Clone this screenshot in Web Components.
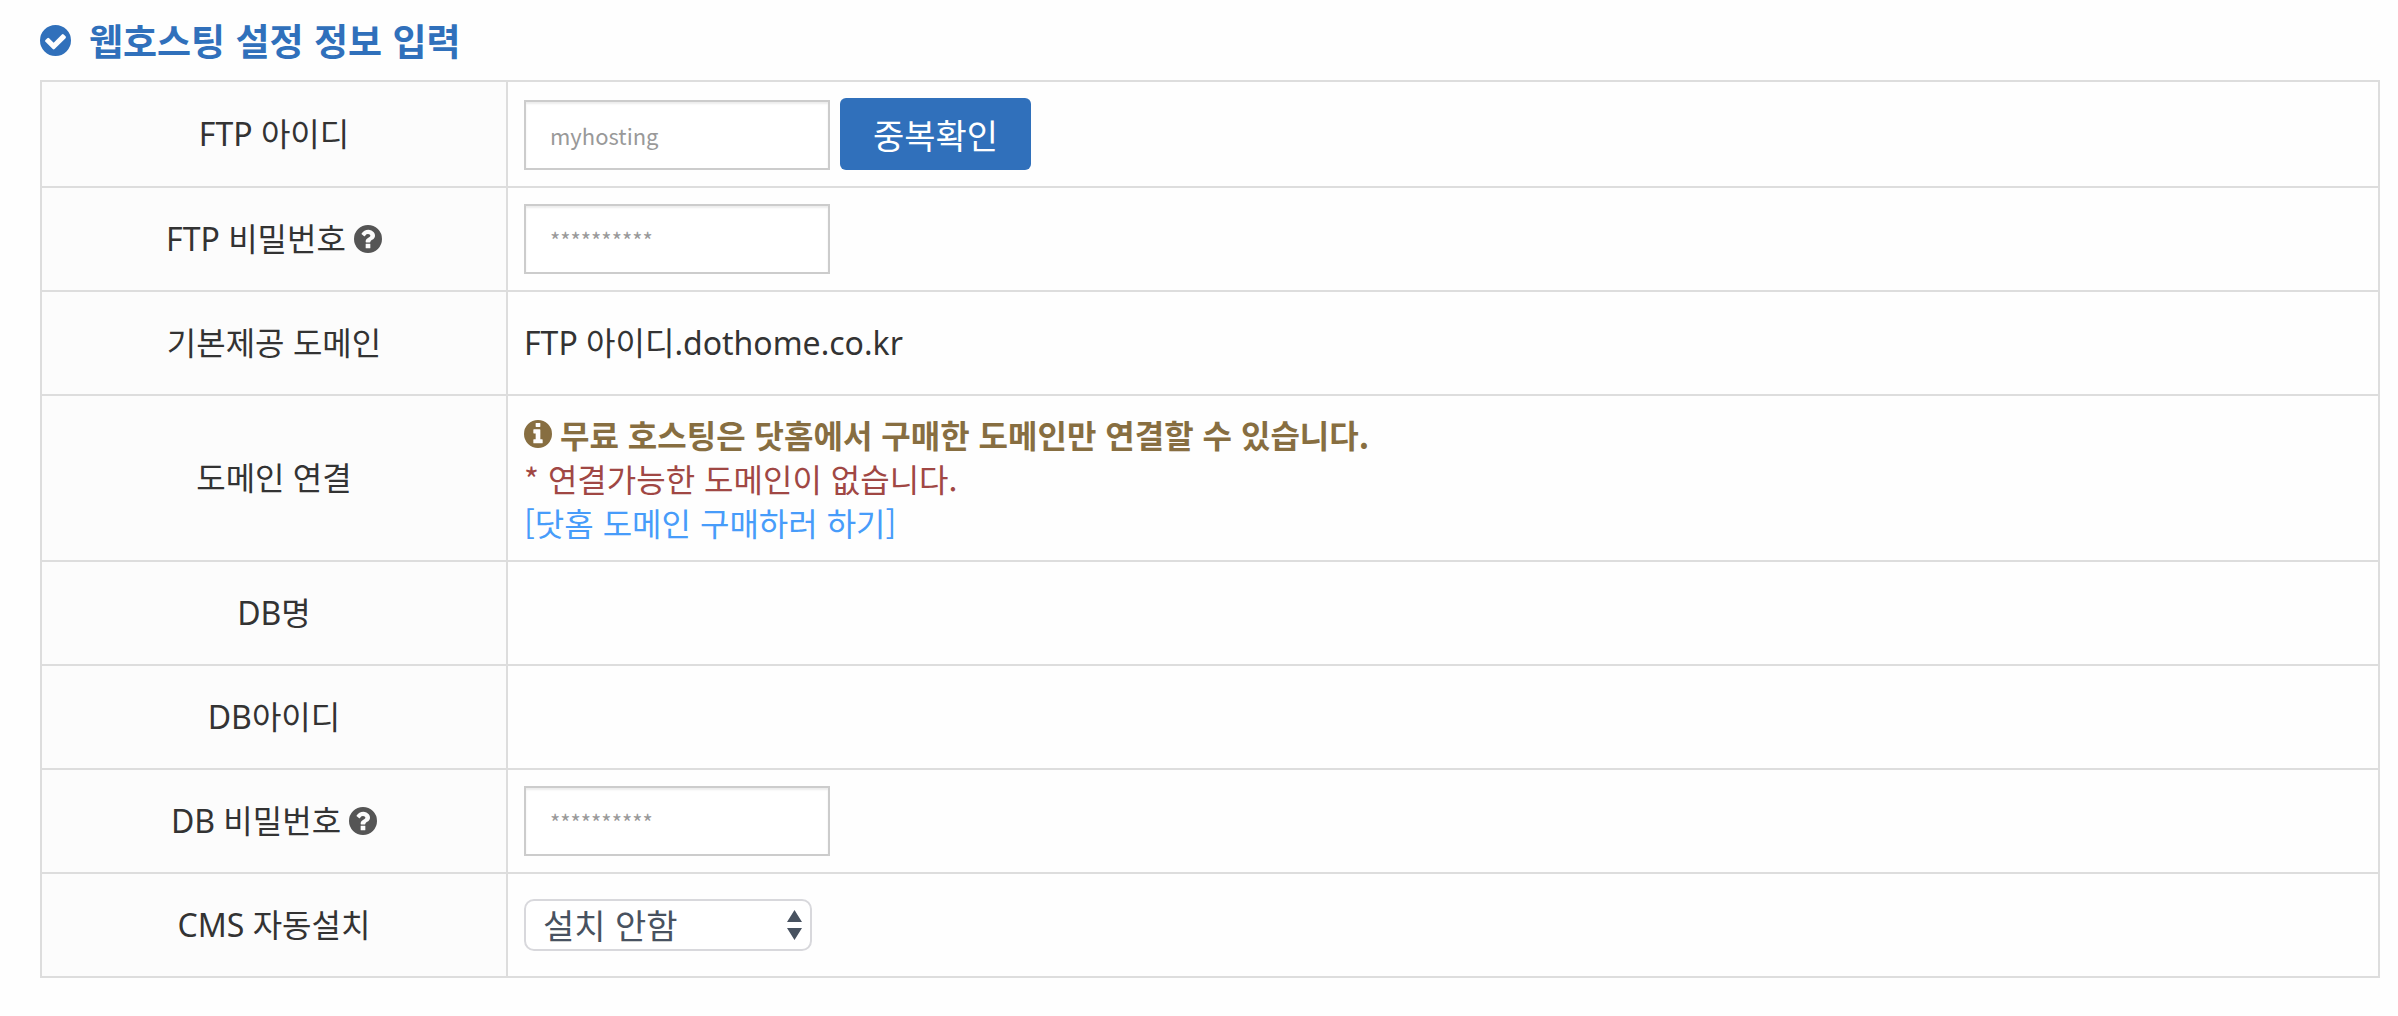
<!DOCTYPE html>
<html lang="ko">
<head>
<meta charset="UTF-8">
<meta name="viewport" content="width=device-width, initial-scale=1.0">
<title>웹호스팅 설정 정보 입력</title>
<style>
    body {
        margin: 0;
        background: #fefefe;
        color: #333;
        font-family: "Noto Sans CJK KR", "Noto Sans", sans-serif;
        font-size: 32px;
        line-height: 44px;
    }

    main {
        padding: 16px 18px 38px 40px;
    }
</style>
</head>
<body>
<main>
    <section-title icon="check">웹호스팅 설정 정보 입력</section-title>
    <hosting-form></hosting-form>
</main>

<script>
const ICONS = {
    check: 'M1412 734q0-28-18-46l-91-90q-19-19-45-19t-45 19l-408 407-226-226q-19-19-45-19t-45 19l-91 90q-18 18-18 46 0 27 18 45l362 362q19 19 45 19 27 0 46-19l543-543q18-18 18-45z',
    question: 'M1024 1376v-192q0-14-9-23t-23-9h-192q-14 0-23 9t-9 23v192q0 14 9 23t23 9h192q14 0 23-9t9-23zm256-672q0-88-55.5-163t-138.5-116-170-41q-243 0-371 213-15 24 8 42l132 100q7 6 19 6 16 0 25-12 53-68 86-92 34-24 86-24 48 0 85.5 26t37.5 59q0 38-20 61t-68 45q-63 28-115.5 86.5t-52.5 125.5v36q0 14 9 23t23 9h192q14 0 23-9t9-23q0-19 21.5-49.5t54.5-49.5q32-18 49-28.5t46-35 44.5-48 28-60.5 12.5-81z',
    info: 'M1152 1376v-160q0-14-9-23t-23-9h-96v-512q0-14-9-23t-23-9h-320q-14 0-23 9t-9 23v160q0 14 9 23t23 9h96v320h-96q-14 0-23 9t-9 23v160q0 14 9 23t23 9h448q14 0 23-9t9-23zm-128-896v-160q0-14-9-23t-23-9h-192q-14 0-23 9t-9 23v160q0 14 9 23t23 9h192q14 0 23-9t9-23z'
};

// Round badge with the glyph cut out of it
class CircleIcon extends HTMLElement {
    connectedCallback() {
        this.attachShadow({ mode: 'open' });
        this.shadowRoot.innerHTML = `
            <style>
                :host {
                    display: inline-block;
                    flex: none;
                    width: var(--icon-size, 28px);
                    height: var(--icon-size, 28px);
                }

                svg {
                    display: block;
                    width: 100%;
                    height: 100%;
                    fill: currentColor;
                }
            </style>
            <svg viewBox="128 128 1536 1536" aria-hidden="true">
                <path fill-rule="evenodd" d="${ICONS[this.getAttribute('name')]}M1664 896a768 768 0 1 1-1536 0a768 768 0 1 1 1536 0z"/>
            </svg>
        `;
    }
}

class SectionTitle extends HTMLElement {
    connectedCallback() {
        this.attachShadow({ mode: 'open' });
        this.shadowRoot.innerHTML = `
            <style>
                :host {
                    display: block;
                    --icon-size: 31px;
                }

                h2 {
                    display: flex;
                    align-items: center;
                    gap: 18px;
                    margin: 0 0 16px;
                    color: #3070bb;
                    font-size: 37px;
                    font-weight: 700;
                    line-height: 48px;
                }
            </style>
            <h2><circle-icon name="${this.getAttribute('icon')}"></circle-icon><slot></slot></h2>
        `;
    }
}

class HostingForm extends HTMLElement {
    connectedCallback() {
        this.attachShadow({ mode: 'open' });
        this.shadowRoot.innerHTML = `
            <style>
                :host {
                    display: block;
                }

                table {
                    width: 100%;
                    border-collapse: collapse;
                    table-layout: fixed;
                }

                .label-col {
                    width: 466px;
                }

                th,
                td {
                    height: 70px;
                    padding: 16px;
                    border: 2px solid #ddd;
                    vertical-align: middle;
                }

                th {
                    background: #fcfcfc;
                    font-weight: 400;
                    text-align: center;
                }

                td {
                    text-align: left;
                }

                th,
                .domain {
                    font-family: "Noto Sans", "Noto Sans CJK KR", sans-serif;
                }

                .with-icon {
                    display: flex;
                    align-items: center;
                    gap: 8px;
                }

                th .with-icon {
                    justify-content: center;
                }

                th circle-icon {
                    color: #555;
                }

                .controls {
                    display: flex;
                    align-items: flex-end;
                    gap: 10px;
                }

                input {
                    box-sizing: border-box;
                    width: 306px;
                    height: 70px;
                    margin: 0;
                    padding: 0 24px;
                    border: 2px solid #ccc;
                    border-radius: 0;
                    background: #fff;
                    box-shadow: inset 0 2px 2px rgba(0, 0, 0, 0.075);
                    color: #555;
                    font-family: inherit;
                    font-size: 22px;
                }

                input::placeholder {
                    color: #999;
                    opacity: 1;
                }

                button {
                    height: 72px;
                    padding: 0 33px;
                    border: 0;
                    border-radius: 6px;
                    background: #3070bb;
                    color: #fff;
                    font-family: inherit;
                    font-size: 34px;
                    cursor: pointer;
                }

                .select {
                    display: block;
                    position: relative;
                    width: 288px;
                }

                select {
                    display: block;
                    box-sizing: border-box;
                    width: 100%;
                    height: 52px;
                    padding: 0 40px 0 17px;
                    border: 2px solid #d8d8dc;
                    border-radius: 10px;
                    background: #fff;
                    color: #485260;
                    font-family: inherit;
                    font-size: 34px;
                    line-height: 48px;
                    appearance: none;
                }

                .select svg {
                    position: absolute;
                    top: 11px;
                    right: 10px;
                    width: 15px;
                    height: 30px;
                    fill: #485260;
                    pointer-events: none;
                }

                p {
                    margin: 0;
                }

                .notice {
                    color: #876e41;
                    font-weight: 700;
                }

                .warning {
                    color: #a04744;
                }

                a {
                    color: #479cfa;
                    text-decoration: none;
                }
            </style>
            <table>
                <colgroup>
                    <col class="label-col">
                    <col>
                </colgroup>
                <tbody>
                    <tr>
                        <th scope="row"><label for="ftp-id">FTP 아이디</label></th>
                        <td>
                            <div class="controls">
                                <input type="text" id="ftp-id" placeholder="myhosting">
                                <button type="button">중복확인</button>
                            </div>
                        </td>
                    </tr>
                    <tr>
                        <th scope="row"><div class="with-icon"><label for="ftp-pw">FTP 비밀번호</label><circle-icon name="question"></circle-icon></div></th>
                        <td><div class="controls"><input type="password" id="ftp-pw" placeholder="**********"></div></td>
                    </tr>
                    <tr>
                        <th scope="row">기본제공 도메인</th>
                        <td class="domain">FTP 아이디.dothome.co.kr</td>
                    </tr>
                    <tr>
                        <th scope="row">도메인 연결</th>
                        <td>
                            <p class="notice with-icon"><circle-icon name="info"></circle-icon>무료 호스팅은 닷홈에서 구매한 도메인만 연결할 수 있습니다.</p>
                            <p class="warning">* 연결가능한 도메인이 없습니다.</p>
                            <p><a href="#domain">[닷홈 도메인 구매하러 하기]</a></p>
                        </td>
                    </tr>
                    <tr>
                        <th scope="row">DB명</th>
                        <td></td>
                    </tr>
                    <tr>
                        <th scope="row">DB아이디</th>
                        <td></td>
                    </tr>
                    <tr>
                        <th scope="row"><div class="with-icon"><label for="db-pw">DB 비밀번호</label><circle-icon name="question"></circle-icon></div></th>
                        <td><div class="controls"><input type="password" id="db-pw" placeholder="**********"></div></td>
                    </tr>
                    <tr>
                        <th scope="row"><label for="cms">CMS 자동설치</label></th>
                        <td>
                            <span class="select">
                                <select id="cms">
                                    <option>설치 안함</option>
                                </select>
                                <svg viewBox="0 0 15 30" aria-hidden="true"><path d="M0 12 7.500 0 15 12zM0 18h15L7.500 30z"/></svg>
                            </span>
                        </td>
                    </tr>
                </tbody>
            </table>
        `;
    }
}

customElements.define('circle-icon', CircleIcon);
customElements.define('section-title', SectionTitle);
customElements.define('hosting-form', HostingForm);
</script>
</body>
</html>
